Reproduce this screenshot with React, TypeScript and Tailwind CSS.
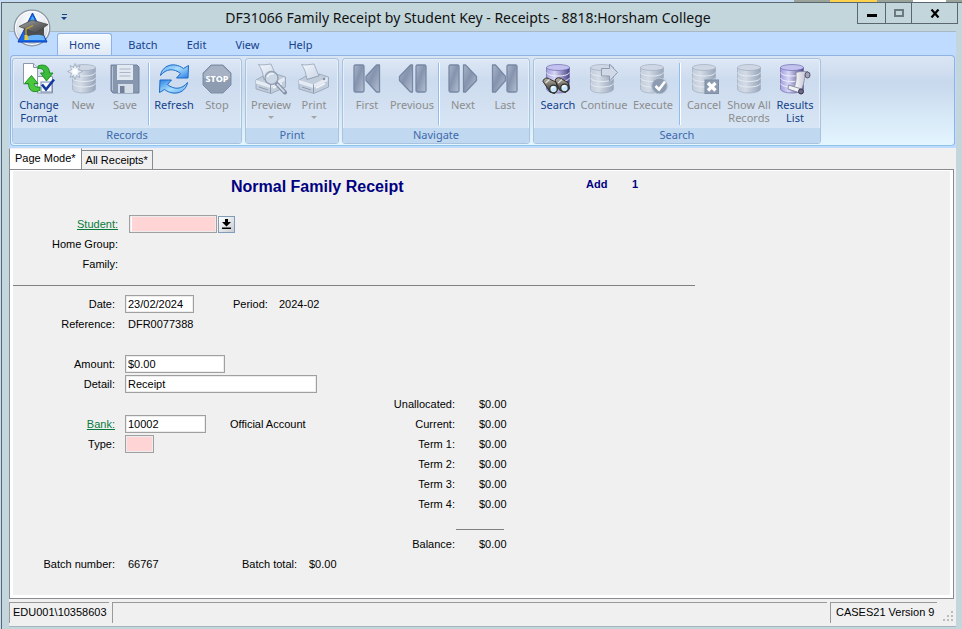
import { useState, type ReactNode } from "react";

const ribbonFont = "font-['Noto_Sans','Open_Sans',sans-serif]";

function Defs() {
  return (
    <svg width="0" height="0" className="absolute" aria-hidden="true">
      <defs>
        <linearGradient id="dbGray" x1="0" x2="1">
          <stop offset="0" stopColor="#c3cddb" />
          <stop offset="0.35" stopColor="#d3dbe6" />
          <stop offset="1" stopColor="#97a5ba" />
        </linearGradient>
        <linearGradient id="dbBlue" x1="0" x2="1">
          <stop offset="0" stopColor="#a3a0dc" />
          <stop offset="0.35" stopColor="#d6d6f6" />
          <stop offset="1" stopColor="#4a4586" />
        </linearGradient>
        <linearGradient id="nav" x1="0" y1="0" x2="1" y2="1">
          <stop offset="0" stopColor="#a9b5ca" />
          <stop offset="0.45" stopColor="#8593ad" />
          <stop offset="1" stopColor="#b4c0d3" />
        </linearGradient>
        <linearGradient id="blueArrow" x1="0" y1="0" x2="1" y2="1">
          <stop offset="0" stopColor="#5aa6f0" />
          <stop offset="0.45" stopColor="#a9defd" />
          <stop offset="1" stopColor="#2a80e2" />
        </linearGradient>
        <linearGradient id="paper" x1="0" y1="0" x2="1" y2="1">
          <stop offset="0" stopColor="#f4f8fd" />
          <stop offset="1" stopColor="#c9d4e4" />
        </linearGradient>
        <linearGradient id="scroll" x1="0" x2="1">
          <stop offset="0" stopColor="#ffffff" />
          <stop offset="1" stopColor="#b9b9cf" />
        </linearGradient>
        <linearGradient id="barrel" x1="0" y1="0" x2="0" y2="1">
          <stop offset="0" stopColor="#b9b4a8" />
          <stop offset="0.5" stopColor="#6e6a62" />
          <stop offset="1" stopColor="#2c2a27" />
        </linearGradient>
        <radialGradient id="orb" cx="0.5" cy="0.3" r="0.7">
          <stop offset="0" stopColor="#ffffff" />
          <stop offset="0.7" stopColor="#dfe5ec" />
          <stop offset="1" stopColor="#a9b4c1" />
        </radialGradient>
        <linearGradient id="cap" x1="0" y1="0" x2="1" y2="1">
          <stop offset="0" stopColor="#a2a2a2" />
          <stop offset="1" stopColor="#3a3a3a" />
        </linearGradient>
      </defs>
    </svg>
  );
}

function Icon({ children }: { children: ReactNode }) {
  return (
    <svg width="32" height="32" viewBox="0 0 32 32" aria-hidden="true">
      {children}
    </svg>
  );
}

function Cylinder({ x = 4, blue = false }: { x?: number; blue?: boolean }) {
  const fill = blue ? "url(#dbBlue)" : "url(#dbGray)";
  const ring = blue ? "#f0f0ff" : "#e6ecf4";
  const edge = blue ? "#6f6bb0" : "#a0adc0";
  return (
    <g transform={`translate(${x} 0)`}>
      <path d="M0.5 4.5V26c0 2.2 5 4 11.500 4s11.500-1.800 11.500-4V4.500z" fill={fill} stroke={edge} strokeWidth="0.7" />
      <path
        d="M0.800 9.500c0 2 5 3.500 11.200 3.500s11.200-1.500 11.200-3.500M0.800 15c0 2 5 3.500 11.200 3.500s11.200-1.500 11.200-3.500M0.800 20.500c0 2 5 3.500 11.200 3.500s11.200-1.500 11.200-3.500"
        fill="none"
        stroke={ring}
        strokeWidth="1"
      />
      <ellipse cx="12" cy="4.500" rx="11.500" ry="3" fill={blue ? "#c3c1ee" : "#ced7e3"} stroke={edge} strokeWidth="0.7" />
    </g>
  );
}

const ChangeFormatIcon = () => (
  <Icon>
    <path d="M0.500 0.500h10l4 4V21h-14z" fill="#fff" stroke="#8d99a8" />
    <path d="M10.500 0.500v4h4" fill="#dfe6ee" stroke="#8d99a8" />
    <path d="M14.500 13.500h15V30h-15z" fill="#fff" stroke="#8d99a8" />
    <path d="M15 3c6-2.500 11.500 0 11.500 7H30l-6.500 8-6-8h3.500c0-3-2-5-6-4.500z" fill="#3cba3c" stroke="#128a1a" strokeWidth="0.9" />
    <path d="M17 27.500C9 30.500 5.500 27 5.500 20.500H1.500L8.500 12.500l6.500 8h-4c0 2.500 2 4 6 3.500z" fill="#4cc83f" stroke="#128a1a" strokeWidth="0.9" />
    <rect x="18" y="19" width="11" height="10" fill="#f4f8ff" stroke="#7186ae" />
    <path d="M19 21.500l4 5 8-10" fill="none" stroke="#12389c" strokeWidth="2.600" />
  </Icon>
);

const NewIcon = () => (
  <Icon>
    <Cylinder x={5} />
    <path d="M8 0.500l1.500 4 3.500-2-1.600 4.200 4.100 1.800-4.100 1.800 1.600 4.200-3.500-2-1.500 4-1.500-4-3.500 2 1.600-4.200L0.500 8.500l4.100-1.800L3 2.500l3.500 2z" fill="#e9eff6" stroke="#9aa8bc" strokeWidth="0.8" />
    <circle cx="8" cy="8.500" r="2.600" fill="#fff" />
  </Icon>
);

const SaveIcon = () => (
  <Icon>
    <path d="M3 2h25l2 2v26H4l-2-2V2z" fill="#8897b0" stroke="#71819c" />
    <path d="M8 2h16v15H8z" fill="#e3e9f1" />
    <path d="M10.500 6h11M10.500 9.500h11M10.500 13h11" stroke="#aab6c8" strokeWidth="1.200" />
    <path d="M9 21h15v9H9z" fill="#d5dde8" />
    <path d="M11 23h4.500v7H11z" fill="#71819c" />
    <path d="M3.500 3.500v24" stroke="#b9c4d5" />
  </Icon>
);

const refreshArrow = "M2.500 12.500C4 3 15-2 25.500 5.500L30.500 2.500 30 15H18.500L22.500 10.500C16 5 8 5.500 2.500 12.500z";
const RefreshIcon = () => (
  <Icon>
    <path d={refreshArrow} fill="url(#blueArrow)" stroke="#1b68c8" strokeLinejoin="round" />
    <path d={refreshArrow} transform="rotate(180 16 16)" fill="url(#blueArrow)" stroke="#1b68c8" strokeLinejoin="round" />
  </Icon>
);

const StopIcon = () => (
  <Icon>
    <path d="M10 2h12l8 8v12l-8 8H10l-8-8V10z" fill="#8e9cb2" stroke="#7f8ea6" />
    <path d="M10.500 3h11L29 10.500V15c-8-3-18-3-26 0v-4.500z" fill="#a7b3c5" />
    <text x="16" y="19" textAnchor="middle" fontSize="9" fontWeight="800" fill="#fff" fontFamily="Noto Sans, sans-serif">
      STOP
    </text>
  </Icon>
);

function Printer() {
  return (
    <>
      <path d="M3.500 1.500c4 1 7 0 12.500-0.500l5 12-12.500 3.500C8.500 10 6 5 3.500 1.500z" fill="url(#paper)" stroke="#93a1b5" strokeWidth="0.8" />
      <path d="M1 17l7-4 1 3.500 12-3.500v-2l9.500 3v10L16 30.500 1 26z" fill="#c2cddc" stroke="#93a1b5" strokeWidth="0.8" />
      <path d="M1 17l14.500 4.500 14-7.500v4L15.500 25 1 20.500z" fill="#e6ecf4" />
      <path d="M15.500 21.500V30M4 24l9 3" stroke="#8d9bb0" strokeWidth="1" />
      <path d="M18 25l9-4.500" stroke="#f4f7fb" strokeWidth="1.500" />
    </>
  );
}

const PrintIcon = () => (
  <Icon>
    <Printer />
    <circle cx="26" cy="16" r="1.300" fill="#8191ab" />
  </Icon>
);

const PreviewIcon = () => (
  <Icon>
    <Printer />
    <path d="M21 20l9 9.500" stroke="#8493aa" strokeWidth="4" strokeLinecap="round" />
    <path d="M22 21l7.500 8" stroke="#d7dfe9" strokeWidth="1.800" />
    <circle cx="16.500" cy="15" r="6.500" fill="#ccd8e6" stroke="#93a1b5" strokeWidth="1.400" />
    <path d="M12.500 14c1-3 4-4 6.500-3" fill="none" stroke="#f7faff" strokeWidth="1.300" />
  </Icon>
);

const NavIcon = ({ bar, arrow }: { bar: number; arrow: string }) => (
  <Icon>
    <rect x={bar} y="2" width="10" height="27" rx="1.500" fill="url(#nav)" stroke="#7888a4" strokeWidth="1.300" />
    <path d={arrow} fill="url(#nav)" stroke="#7888a4" strokeWidth="1.300" strokeLinejoin="round" />
  </Icon>
);
const FirstIcon = () => <NavIcon bar={3} arrow="M28.500 2v27h-3L15 17.500v-4L25.500 2z" />;
const PreviousIcon = () => <NavIcon bar={20} arrow="M16.500 2v27h-2L3.500 17.500v-4L14.500 2z" />;
const NextIcon = () => <NavIcon bar={2} arrow="M16.500 2v27h2l11-11.500v-4L18.500 2z" />;
const LastIcon = () => <NavIcon bar={18} arrow="M3.500 2v27h3l10-11.500v-4L6.500 2z" />;

const SearchIcon = () => (
  <Icon>
    <Cylinder x={4} blue />
    <path d="M1 18.500c0-2 2-3.500 4-3.500l9 4 2 7-3.500 4.500L8 29z" fill="url(#barrel)" stroke="#24221f" strokeWidth="0.9" />
    <path d="M13 17c1-2 3-2.500 5-2l8 4.500 1.500 6-4 4-6-2.500z" fill="url(#barrel)" stroke="#24221f" strokeWidth="0.9" />
    <path d="M3.500 20l4-3.500M16 20l4-3.500" stroke="#e6e2d8" strokeWidth="1.200" />
    <circle cx="11.500" cy="26" r="3.800" fill="#c6e8fd" stroke="#35332f" strokeWidth="1.300" />
    <circle cx="22.500" cy="25" r="3.800" fill="#c6e8fd" stroke="#35332f" strokeWidth="1.300" />
    <path d="M9.500 25.500c0.500-1.500 2-2 3-1.500M20.500 24.500c0.500-1.500 2-2 3-1.500" fill="none" stroke="#fff" strokeWidth="1.300" />
  </Icon>
);

const ContinueIcon = () => (
  <Icon>
    <Cylinder x={2} />
    <path d="M13.500 5.500h8V1l8 8.500-8 8.500v-5h-8z" fill="#d0d9e5" stroke="#8d9bb0" />
  </Icon>
);

const ExecuteIcon = () => (
  <Icon>
    <Cylinder x={3} />
    <circle cx="22.500" cy="23" r="7.800" fill="#8e9cb2" stroke="#b4c0d0" />
    <path d="M18.500 23l3.500 3.500 6-8" fill="none" stroke="#fff" strokeWidth="2.600" />
  </Icon>
);

const CancelIcon = () => (
  <Icon>
    <Cylinder x={4} />
    <rect x="17" y="17" width="13.500" height="13.500" fill="#8e9cb2" stroke="#7f8ea6" />
    <path d="M20 20l7.500 7.500M27.500 20l-7.500 7.500" stroke="#fff" strokeWidth="3.200" />
  </Icon>
);

const ShowAllIcon = () => (
  <Icon>
    <Cylinder x={4} />
  </Icon>
);

const ResultsIcon = () => (
  <Icon>
    <Cylinder x={1} blue />
    <path d="M17 9.500c4-1.500 8-1 12-1-4 2-3 8-4.500 12l-2 7-8-2.500c2.500-3 3-10 2.500-15.500z" fill="url(#scroll)" stroke="#8a8aa0" strokeWidth="0.8" />
    <ellipse cx="28.500" cy="12" rx="2.500" ry="3" fill="#a3a3bd" stroke="#55556d" />
    <path d="M9.500 22l13 4v4.500L9 26z" fill="#f1f1f8" stroke="#77778e" strokeWidth="0.8" />
    <ellipse cx="22" cy="28.500" rx="2.500" ry="2.500" fill="#6b6b85" stroke="#34344a" />
  </Icon>
);

type Item = { label: string; icon: ReactNode; width: string; on?: boolean; menu?: boolean; endsCluster?: boolean };

const groups: { name: string; items: Item[] }[] = [
  {
    name: "Records",
    items: [
      { label: "Change Format", icon: <ChangeFormatIcon />, width: "w-[46px]", on: true },
      { label: "New", icon: <NewIcon />, width: "w-[42px]" },
      { label: "Save", icon: <SaveIcon />, width: "w-[42px]", endsCluster: true },
      { label: "Refresh", icon: <RefreshIcon />, width: "w-11", on: true },
      { label: "Stop", icon: <StopIcon />, width: "w-[42px]" },
    ],
  },
  {
    name: "Print",
    items: [
      { label: "Preview", icon: <PreviewIcon />, width: "w-11", menu: true },
      { label: "Print", icon: <PrintIcon />, width: "w-[42px]", menu: true },
    ],
  },
  {
    name: "Navigate",
    items: [
      { label: "First", icon: <FirstIcon />, width: "w-[42px]" },
      { label: "Previous", icon: <PreviousIcon />, width: "w-[48px]", endsCluster: true },
      { label: "Next", icon: <NextIcon />, width: "w-[42px]" },
      { label: "Last", icon: <LastIcon />, width: "w-[42px]" },
    ],
  },
  {
    name: "Search",
    items: [
      { label: "Search", icon: <SearchIcon />, width: "w-[42px]", on: true },
      { label: "Continue", icon: <ContinueIcon />, width: "w-[50px]" },
      { label: "Execute", icon: <ExecuteIcon />, width: "w-[48px]", endsCluster: true },
      { label: "Cancel", icon: <CancelIcon />, width: "w-[42px]" },
      { label: "Show All Records", icon: <ShowAllIcon />, width: "w-[48px]" },
      { label: "Results List", icon: <ResultsIcon />, width: "w-11", on: true },
    ],
  },
];

function RibbonButton({ item }: { item: Item }) {
  return (
    <div className="flex">
      <button
        type="button"
        disabled={!item.on}
        className={`flex flex-col items-center text-[11px] leading-[13px] ${item.width} ${item.on ? "text-[#15428b]" : "text-[#8d8d8d]"}`}
      >
        {item.icon}
        <span className="mt-[3px] text-center">{item.label}</span>
        {item.menu && <span className="mt-[5px] border-x-[3px] border-t-[3px] border-x-transparent border-t-[#a5a5a5]" />}
      </button>
      {item.endsCluster && <span className="mx-[2px] h-[62px] w-[2px] border-l border-[#8dbdf5] bg-white" />}
    </div>
  );
}

function Ribbon() {
  return (
    <div className="mx-px flex h-[91px] gap-[3px] rounded-[4px] border border-[#8db2e3] border-b-[#8fc4e6] bg-linear-to-b from-[#dbe6f4] via-[#c8d8ed] via-30% to-[#e4f6ff] px-px pt-[2px]">
      {groups.map((g) => (
        <section
          key={g.name}
          aria-label={g.name}
          className="flex h-[86px] flex-col overflow-hidden rounded-[3px] border border-[#a9c3df] bg-linear-to-b from-[#dee8f5] via-[#ccdbee] via-25% to-[#dbe8f6] shadow-[inset_0_0_0_1px_#e5eef9]"
        >
          <div className="flex flex-1 px-[3px] pt-1">
            {g.items.map((item) => (
              <RibbonButton key={item.label} item={item} />
            ))}
          </div>
          <h2 className="h-[15px] bg-[#c1d8f1] text-center text-[11px] leading-[14px] text-[#3e6aaa]">{g.name}</h2>
        </section>
      ))}
    </div>
  );
}

function TitleBar() {
  const button = "flex items-center justify-center border-r border-b border-[#5b6770]";
  return (
    <header className="flex h-7 pr-1">
      <div className="flex w-[77px] pl-[59px]">
        <button type="button" aria-label="Customize toolbar" className="flex flex-col items-center justify-center gap-[2px]">
          <span className="h-px w-[5px] bg-[#15428b]" />
          <span className="border-x-[3px] border-t-[3px] border-x-transparent border-t-[#15428b]" />
        </button>
      </div>
      <h1 className="flex-1 text-center font-['Noto_Sans','Open_Sans',sans-serif] text-[14px] leading-[30px] whitespace-nowrap text-[#111]">
        DF31066 Family Receipt by Student Key - Receipts - 8818:Horsham College
      </h1>
      <div className="flex h-[21px] w-[101px] border-l border-[#5b6770]">
        <button type="button" aria-label="Minimize" className={`${button} w-7`}>
          <span className="mt-1 h-[3px] w-[10px] bg-black" />
        </button>
        <button type="button" aria-label="Maximize" className={`${button} w-[26px]`}>
          <span className="h-2 w-[10px] border-2 border-[#6c7a80]" />
        </button>
        <button type="button" aria-label="Close" className={`${button} flex-1`}>
          <svg width="10" height="9" viewBox="0 0 10 9" aria-hidden="true">
            <path d="M1.500 0.500l7 8M8.500 0.500l-7 8" stroke="#000" strokeWidth="2.200" />
          </svg>
        </button>
      </div>
    </header>
  );
}

function AppOrb() {
  return (
    <button type="button" aria-label="Application menu" className="absolute top-[6px] left-[11px]">
      <svg width="38" height="38" viewBox="0 0 38 38" aria-hidden="true">
        <circle cx="19" cy="19" r="17.800" fill="url(#orb)" stroke="#8b97a6" strokeWidth="1.300" />
        <circle cx="19" cy="19" r="16.500" fill="none" stroke="#fff" />
        <path d="M19.500 4L34 33H5z" fill="#1769e8" stroke="#0b3fb5" />
        <path d="M19.500 7l3 6h-6z" fill="#49b4ff" />
        <path d="M14 26l16-1 2 6H11z" fill="#6db6fb" />
        <path d="M11 19l11 5 9-6v9c-5-2-14-2-19 2z" fill="#4e4e4e" />
        <path d="M6 17.500L19 11l16 4.500L23 24z" fill="url(#cap)" stroke="#444" strokeWidth="0.7" />
        <path d="M20 16.500l-7 3.500v7" fill="none" stroke="#c8a62c" strokeWidth="1.200" />
        <path d="M11.500 26h3l1 5h-4z" fill="#e8c93c" />
      </svg>
    </button>
  );
}

const tabs = ["Home", "Batch", "Edit", "View", "Help"];

function RibbonTabs() {
  return (
    <nav className="flex h-[23px] items-end gap-px pl-12">
      {tabs.map((t, i) => (
        <button
          key={t}
          type="button"
          className={`h-[22px] rounded-t-[3px] border border-b-0 px-[11px] text-[11px] leading-5 text-[#15428b] ${
            i === 0 ? "mr-px border-[#8db2e3] bg-linear-to-b from-[#f5faff] to-[#dfe9f6]" : "mx-[2px] border-transparent"
          }`}
        >
          {t}
        </button>
      ))}
    </nav>
  );
}

const box = "h-[18px] border border-[#a0a0a0] pl-[2px] text-[11px] shadow-[inset_0_0_0_1px_#ececec] outline-none";
const row = "flex h-5 items-center";

function Field({
  id,
  label,
  width,
  initial = "",
  linked,
  required,
  children,
}: {
  id: string;
  label: string;
  width: string;
  initial?: string;
  linked?: boolean;
  required?: boolean;
  children?: ReactNode;
}) {
  const [value, setValue] = useState(initial);
  return (
    <div className={row}>
      <label htmlFor={id} className={`mr-[10px] w-[102px] text-right ${linked ? "text-[#0a7a3c] underline" : ""}`}>
        {label}
      </label>
      <input
        id={id}
        value={value}
        onChange={(e) => setValue(e.target.value)}
        className={`${box} ${width} ${required ? "bg-[#ffd4d4]" : "bg-white"}`}
      />
      {children}
    </div>
  );
}

const totals = ["Unallocated:", "Current:", "Term 1:", "Term 2:", "Term 3:", "Term 4:"];

function Total({ label }: { label: string }) {
  return (
    <div className={row}>
      <dt className="w-[72px] text-right">{label}</dt>
      <dd className="ml-6">$0.00</dd>
    </div>
  );
}

function ReceiptForm() {
  const [student, setStudent] = useState("");
  return (
    <form className="flex-1 bg-[#f0f0f0]">
      <div className="flex h-[43px] pt-[5px] font-bold text-[#000080]">
        <h2 className="ml-[218px] w-[355px] text-[16px] leading-[22px]">Normal Family Receipt</h2>
        <span className="w-[46px] leading-4">Add</span>
        <span className="leading-4">1</span>
      </div>

      <div className={row}>
        <label htmlFor="student" className="mr-[11px] w-[105px] text-right text-[#0a7a3c] underline">
          Student:
        </label>
        <input
          id="student"
          value={student}
          onChange={(e) => setStudent(e.target.value)}
          className="h-[18px] w-[88px] border border-[#a0a0a0] bg-[#ffd4d4] pl-[2px] shadow-[inset_0_0_0_1px_#ececec,inset_1px_0_0_1px_#fff] outline-none"
        />
        <button
          type="button"
          aria-label="Look up student"
          className="ml-px flex h-[17px] w-[17px] items-center justify-center border border-[#7f9db9] bg-linear-to-br from-white to-[#c9cdd2]"
        >
          <svg width="9" height="10" viewBox="0 0 9 10" aria-hidden="true">
            <path d="M3 0h3v3h3L4.500 7.500 0 3h3zM0 8.500h9V10H0z" fill="#000" />
          </svg>
        </button>
      </div>
      <div className={row}>
        <span className="w-[105px] text-right">Home Group:</span>
      </div>
      <div className={row}>
        <span className="w-[105px] text-right">Family:</span>
      </div>

      <hr className="mt-[11px] mb-2 w-[682px] border-[#808080]" />

      <div className="flex">
        <div className="w-[370px] shrink-0">
          <Field id="date" label="Date:" width="w-[69px]" initial="23/02/2024">
            <span className="ml-[39px] w-[46px]">Period:</span>
            <span>2024-02</span>
          </Field>
          <div className={row}>
            <span className="mr-[13px] w-[102px] text-right">Reference:</span>
            <span>DFR0077388</span>
          </div>
          <div className="mt-5">
            <Field id="amount" label="Amount:" width="w-[100px]" initial="$0.00" />
            <Field id="detail" label="Detail:" width="w-[192px]" initial="Receipt" />
          </div>
          <div className="mt-5">
            <Field id="bank" label="Bank:" width="w-[81px]" initial="10002" linked>
              <span className="ml-6">Official Account</span>
            </Field>
            <Field id="type" label="Type:" width="w-[29px]" required />
          </div>
        </div>
        <dl className="pt-[100px]">
          {totals.map((t) => (
            <Total key={t} label={t} />
          ))}
          <div className="mt-[15px] mb-1 ml-[73px] h-px w-12 bg-[#808080]" />
          <Total label="Balance:" />
        </dl>
      </div>
      <div className={row}>
        <span className="mr-[13px] w-[102px] text-right">Batch number:</span>
        <span className="w-[114px]">66767</span>
        <span className="w-[67px]">Batch total:</span>
        <span>$0.00</span>
      </div>
    </form>
  );
}

function StatusBar() {
  const panel = "border-t border-l border-[#9a9a9a]";
  return (
    <footer className="mt-[2px] flex h-[26px] gap-[3px] border-b border-[#a5b4bc] bg-[#f0f0f0] pt-px pb-[3px] text-[11px] leading-[18px] whitespace-nowrap">
      <div className={`${panel} w-[100px] pl-[3px]`}>EDU001\10358603</div>
      <div className={`${panel} flex-1`} />
      <div className={`${panel} w-[107px] pl-[5px]`}>CASES21 Version 9</div>
      <div className="flex w-4 items-end">
        <svg width="12" height="12" viewBox="0 0 12 12" fill="#bdbdbd" className="ml-[3px]" aria-hidden="true">
          <path d="M8 0h2v2H8zM8 4h2v2H8zM4 4h2v2H4zM8 8h2v2H8zM4 8h2v2H4zM0 8h2v2H0z" />
        </svg>
      </div>
    </footer>
  );
}

function DesktopEdge() {
  return (
    <div className="flex h-[2px] justify-end" aria-hidden="true">
      <span className="w-9 bg-[#9aa39a]" />
      <span className="w-[47px] bg-[#fbd24a]" />
      <span className="w-9 bg-[#9aa39a]" />
      <span className="w-[33px] bg-white" />
      <span className="w-4 bg-[#9aa39a]" />
    </div>
  );
}

export default function App() {
  return (
    <div className="flex min-h-screen flex-col bg-[#c6dcf2] font-['Liberation_Sans',Arial,sans-serif] text-[11px] leading-[14px] text-black">
      <Defs />
      <DesktopEdge />
      <div className="relative ml-px flex flex-1 flex-col border-t border-l border-[#5b6770] bg-[#c3d6dc]">
        <TitleBar />
        <div className="mr-[6px] mb-[2px] ml-[7px] flex flex-1 flex-col bg-[#f0f0f0]">
          <div className={`border-t border-[#aab8c6] bg-[#bfdbff] pb-[2px] ${ribbonFont}`}>
            <RibbonTabs />
            <Ribbon />
          </div>
          <div role="tablist" className="flex h-[21px] items-end">
            <button type="button" role="tab" aria-selected="true" className="h-[21px] border-x border-t border-[#8a8a92] border-t-[#f0f0f0] bg-white px-[5px] pb-[2px]">
              Page Mode*
            </button>
            <button type="button" role="tab" aria-selected="false" className="h-[19px] border border-b-0 border-l-0 border-[#8a8a92] bg-[#f0f0f0] px-1">
              All Receipts*
            </button>
          </div>
          <main className="mr-[2px] flex flex-1 flex-col border border-[#8a8a92] bg-white p-[3px] pt-px">
            <ReceiptForm />
          </main>
          <StatusBar />
        </div>
        <AppOrb />
      </div>
    </div>
  );
}
